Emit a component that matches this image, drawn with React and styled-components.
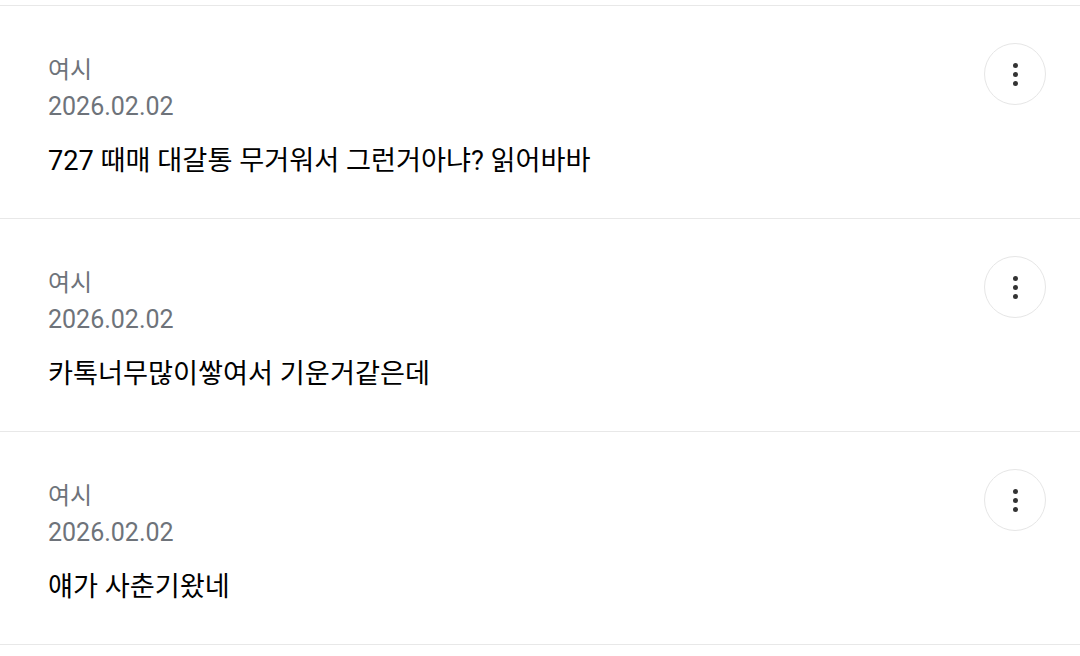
import React from "react";
import styled, { createGlobalStyle } from "styled-components";

const GlobalStyle = createGlobalStyle`
  html, body { margin: 0; padding: 0; background: #ffffff; }
  body { font-family: Roboto, "Noto Sans CJK KR", sans-serif; }
`;

const List = styled.div`
  padding-top: 5px;
  display: flex;
  flex-direction: column;
`;

const Row = styled.div`
  border-top: 1px solid #e8e8e8;
  height: 212px;
  padding: 0 34px 0 48px;
  display: flex;
  align-items: flex-start;
  justify-content: space-between;
  &:last-child { border-bottom: 1px solid #e8e8e8; }
`;

const Body = styled.div`
  display: flex;
  flex-direction: column;
  padding-top: 46px;
`;

const Name = styled.div`
  font-size: 24px;
  line-height: 36px;
  color: #6e737a;
`;

const Date = styled.div`
  margin-top: 1px;
  font-size: 25px;
  line-height: 36px;
  color: #6e737a;
`;

const Text = styled.div`
  margin-top: 16px;
  font-size: 27.2px;
  line-height: 40px;
  color: #000000;
`;

const MoreButton = styled.button`
  margin-top: 37px;
  width: 62px;
  height: 62px;
  border-radius: 50%;
  border: 1.5px solid #e6e6e6;
  background: #fff;
  display: flex;
  flex-direction: column;
  align-items: center;
  justify-content: center;
  gap: 4px;
  padding: 0;
`;

const Dot = styled.span`
  width: 5px;
  height: 5px;
  border-radius: 50%;
  background: #333;
`;

const comments = [
  { name: "여시", date: "2026.02.02", text: "727 때매 대갈통 무거워서 그런거아냐? 읽어바바" },
  { name: "여시", date: "2026.02.02", text: "카톡너무많이쌓여서 기운거같은데" },
  { name: "여시", date: "2026.02.02", text: "얘가 사춘기왔네" },
];

export default function App() {
  return (
    <>
      <GlobalStyle />
      <List>
        {comments.map((c, i) => (
          <Row key={i}>
            <Body>
              <Name>{c.name}</Name>
              <Date>{c.date}</Date>
              <Text>{c.text}</Text>
            </Body>
            <MoreButton aria-label="더보기">
              <Dot />
              <Dot />
              <Dot />
            </MoreButton>
          </Row>
        ))}
      </List>
    </>
  );
}
